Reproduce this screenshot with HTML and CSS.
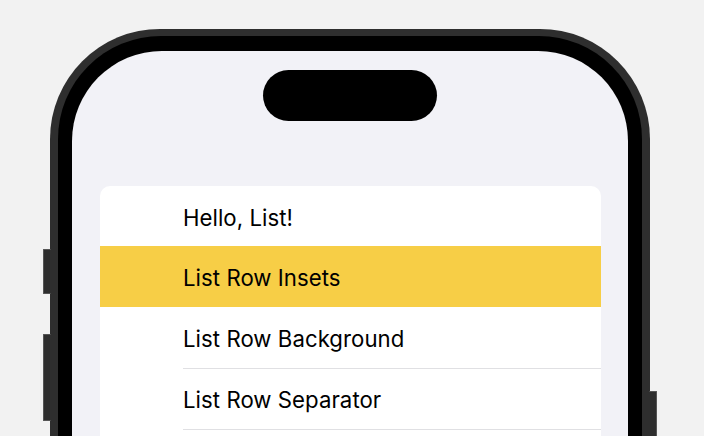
FILE: index.html
```html
<!DOCTYPE html>
<html lang="en">
<head>
<meta charset="utf-8">
<title>List</title>
<link rel="stylesheet" href="styles.css">
</head>
<body>
<div class="stage">
  <div class="phone">
    <span class="btn btn-action"></span>
    <span class="btn btn-volume"></span>
    <span class="btn btn-power"></span>
    <div class="bezel">
      <div class="screen">
        <div class="island"></div>
        <ul class="list">
          <li class="row">Hello, List!</li>
          <li class="row row-yellow">List Row Insets</li>
          <li class="row">List Row Background</li>
          <li class="row sep">List Row Separator</li>
          <li class="row sep"></li>
        </ul>
      </div>
    </div>
  </div>
</div>
</body>
</html>
```
FILE: styles.css
```css
html, body {
  margin: 0;
  padding: 0;
  overflow: hidden;
  background: #f2f2f2;
}
.stage {
  padding: 29px 0 0 50px;
}
.phone {
  position: relative;
  width: 600px;
  height: 407px;
  box-sizing: border-box;
  padding: 7px 8px 0 8px;
  background: #2e2e2e;
  border-radius: 110px 110px 0 0;
}
.bezel {
  height: 100%;
  box-sizing: border-box;
  padding: 15px 14px 0 14px;
  background: #000;
  border-radius: 103px 103px 0 0;
}
.screen {
  height: 100%;
  background: #f2f2f7;
  border-radius: 90px 90px 0 0;
  padding-top: 19px;
  box-sizing: border-box;
  overflow: hidden;
}
.island {
  width: 174px;
  height: 51px;
  margin: 0 auto;
  background: #000;
  border-radius: 26px;
}
.list {
  list-style: none;
  margin: 65px 27px 0 28px;
  padding: 0;
  background: #fff;
  border-radius: 10px 10px 0 0;
  overflow: hidden;
  font-family: Inter, "Liberation Sans", sans-serif;
  font-size: 22.2px;
  letter-spacing: 0.05px;
  color: #000;
}
.row {
  position: relative;
  height: 61px;
  display: flex;
  align-items: center;
  padding-left: 83px;
  padding-top: 2px;
  box-sizing: border-box;
}
.row:first-child {
  height: 60px;
}
.row-yellow {
  background: #f7ce46;
}
.sep::before {
  content: "";
  position: absolute;
  top: 0;
  left: 83px;
  right: 0;
  height: 1px;
  background: #e0e0e3;
}
.btn {
  position: absolute;
  width: 8px;
  background: #2e2e2e;
  border: 1px solid #555;
  box-sizing: border-box;
  border-radius: 1px;
}
.btn-action {
  left: -7px;
  top: 220px;
  height: 45px;
  border-right: none;
}
.btn-volume {
  left: -7px;
  top: 305px;
  height: 87px;
  border-right: none;
}
.btn-power {
  right: -7px;
  top: 362px;
  height: 60px;
  border-left: none;
  border-bottom: none;
}
```
